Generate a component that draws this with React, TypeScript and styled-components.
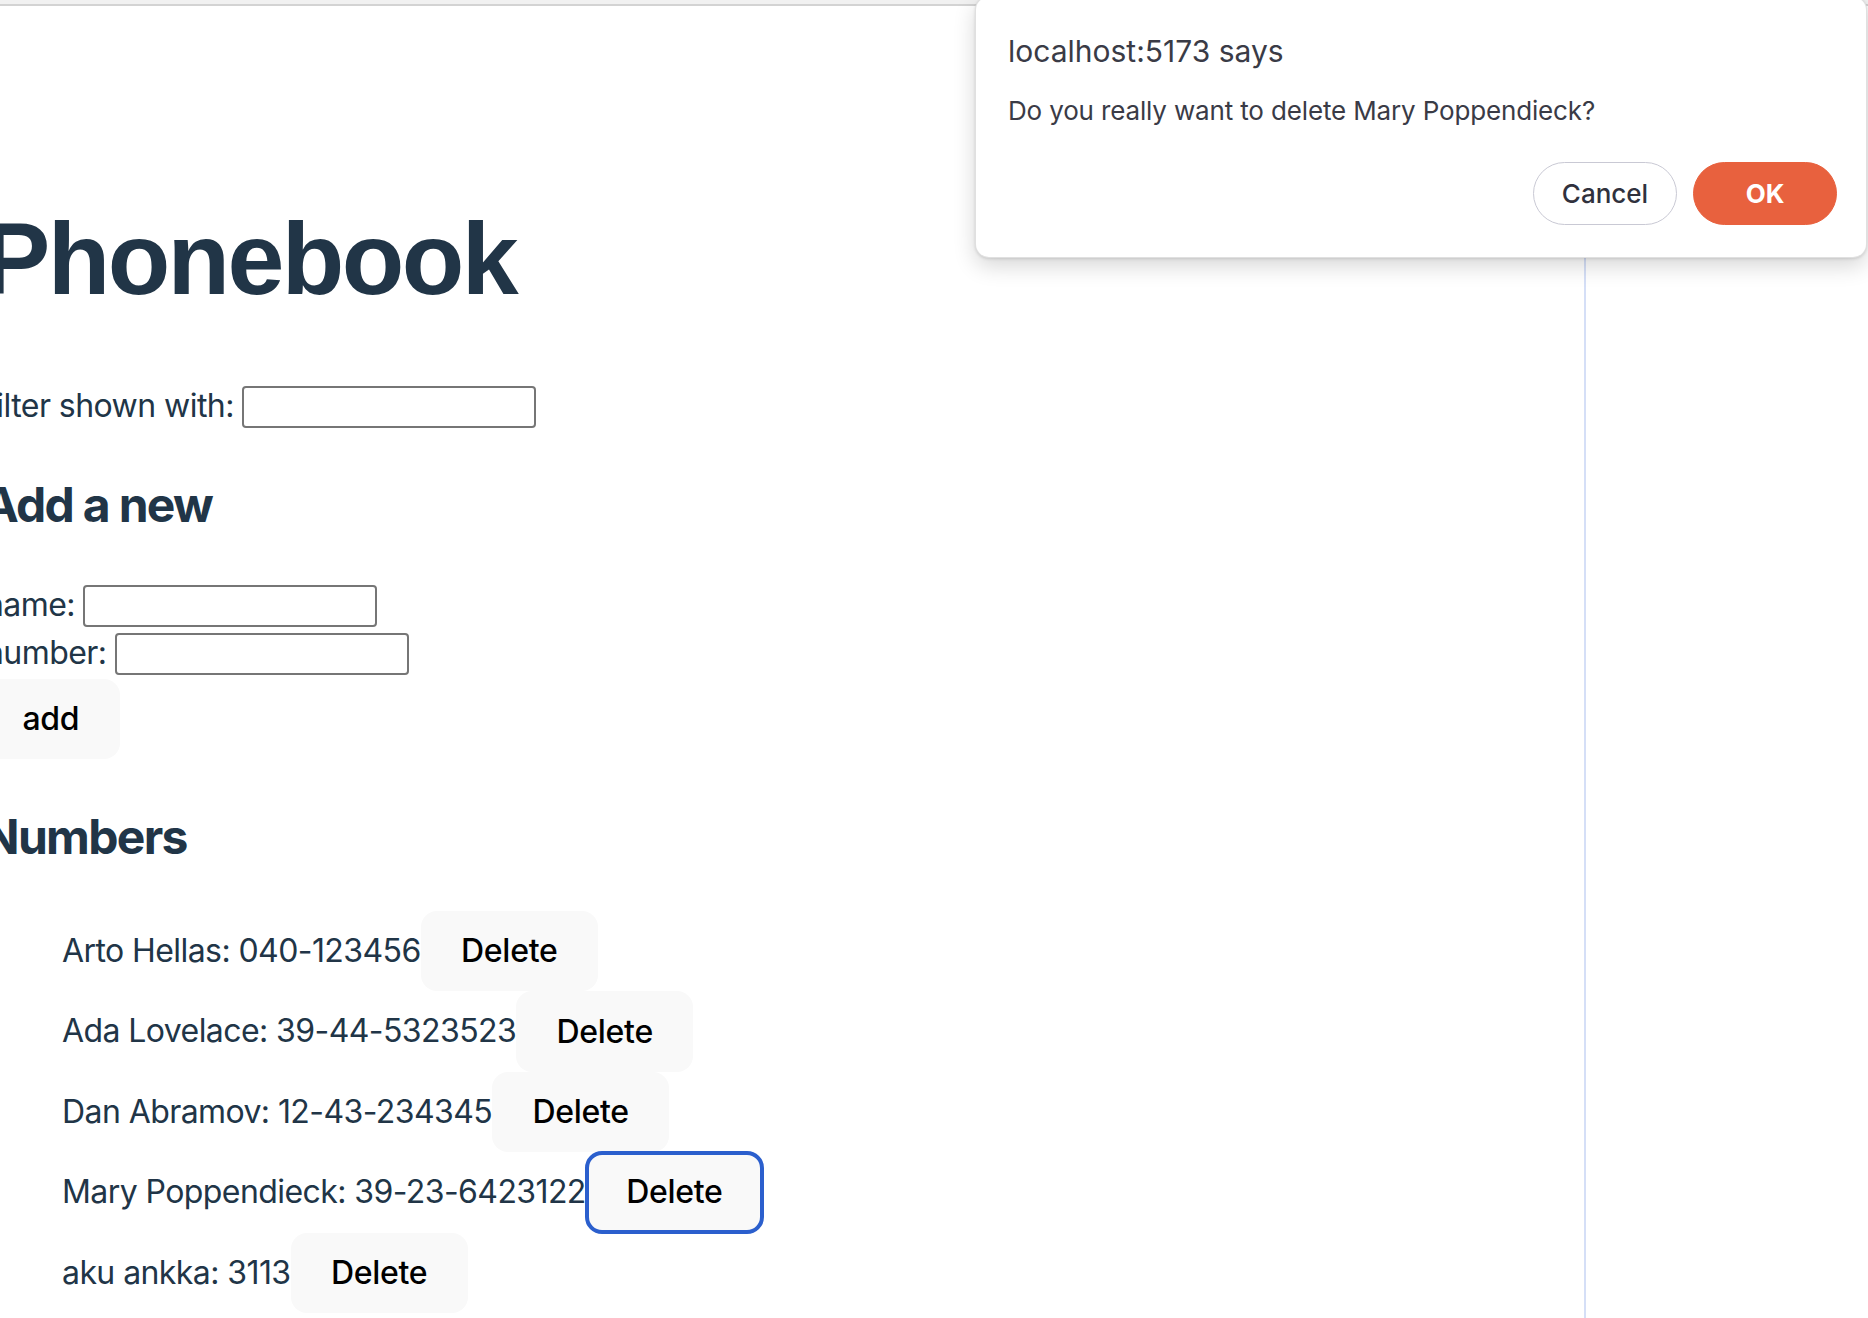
import React from "react";
import styled, { createGlobalStyle } from "styled-components";

const GlobalStyle = createGlobalStyle`
  html, body {
    margin: 0;
    padding: 0;
    height: 100%;
    overflow: hidden;
    background: #ffffff;
  }
  body {
    font-family: Inter, "Noto Sans", sans-serif;
    color: #213547;
  }
  * { box-sizing: border-box; }
`;

const Page = styled.div`
  position: relative;
  height: 1318px;
  overflow: hidden;
`;

const BrowserEdge = styled.div`
  height: 6px;
  background: #f1f1f1;
  border-bottom: 2px solid #d3d3d3;
`;

const Main = styled.div`
  display: flex;
  margin-top: -6px;
`;

const Content = styled.main`
  flex: 0 0 auto;
  width: 1601px;
  margin-left: -15px;
  min-height: 1318px;
  border-right: 2px solid #d5dff7;
  padding-top: 203px;
  font-size: 32px;
  line-height: 48px;
  letter-spacing: -0.55px;
`;

const Title = styled.h1`
  margin: 0 0 66px -3px;
  font-family: "Liberation Sans", Arial, sans-serif;
  font-weight: 700;
  font-size: 102.4px;
  line-height: 1.1;
  letter-spacing: -2.6px;
  color: #213547;
`;

const SubTitle = styled.h2<{ $top: number; $bottom: number }>`
  margin: ${(p) => p.$top}px 0 ${(p) => p.$bottom}px -2px;
  font-size: 48px;
  line-height: 72px;
  font-weight: 700;
  letter-spacing: -1.7px;
  color: #213547;
`;

const Line = styled.div`
  line-height: 48px;
  white-space: nowrap;
`;

const TextInput = styled.input`
  width: 294px;
  height: 42px;
  margin: 0;
  padding: 2px 4px;
  border: 2px solid #767676;
  border-radius: 4px;
  font-family: Inter, sans-serif;
  font-size: 26.67px;
  vertical-align: baseline;
  background: #ffffff;
`;

const Form = styled.form`
  margin: 40px 0 0 0;
`;

const ButtonRow = styled.div`
  margin-top: 2px;
  margin-left: -3px;
`;

const Button = styled.button<{ $focused?: boolean }>`
  display: inline-block;
  margin: 0;
  padding: 19.2px 38.4px;
  border: 2px solid transparent;
  border-radius: 16px;
  background: #f9f9f9;
  color: #000000;
  font-family: Inter, sans-serif;
  font-size: 32px;
  font-weight: 500;
  line-height: 38px;
  letter-spacing: -0.3px;
  cursor: pointer;
  vertical-align: baseline;
  outline: ${(p) => (p.$focused ? "4px solid #2b5fcd" : "none")};
  outline-offset: -3px;
`;

const List = styled.ul`
  margin: 0;
  padding: 0 0 0 77px;
  list-style: none;
`;

const Item = styled.li`
  white-space: nowrap;
`;

const Entry = styled.span`
  letter-spacing: -0.58px;
`;

const Dialog = styled.div`
  position: absolute;
  top: -4px;
  left: 975px;
  width: 892px;
  padding: 36px 29px 32px 32px;
  background: #ffffff;
  border: 1px solid rgba(0, 0, 0, 0.12);
  border-radius: 14px;
  box-shadow: 0 8px 22px rgba(0, 0, 0, 0.16), 0 1px 3px rgba(0, 0, 0, 0.12);
  color: #3a3b46;
`;

const DialogTitle = styled.div`
  font-size: 30px;
  line-height: 36px;
  font-weight: 400;
`;

const DialogMessage = styled.div`
  margin-top: 26px;
  font-size: 26px;
  line-height: 32px;
  letter-spacing: -0.15px;
`;

const DialogActions = styled.div`
  display: flex;
  justify-content: flex-end;
  gap: 16px;
  margin-top: 35px;
`;

const PillButton = styled.button<{ $primary?: boolean }>`
  width: 144px;
  height: 63px;
  border-radius: 32px;
  border: 1.5px solid ${(p) => (p.$primary ? "#e8613e" : "#c9c9d4")};
  background: ${(p) => (p.$primary ? "#e8613e" : "#ffffff")};
  color: ${(p) => (p.$primary ? "#ffffff" : "#30313d")};
  font-family: Inter, sans-serif;
  font-size: 26px;
  font-weight: ${(p) => (p.$primary ? 700 : 500)};
  cursor: pointer;
`;

const persons = [
  { name: "Arto Hellas", number: "040-123456" },
  { name: "Ada Lovelace", number: "39-44-5323523" },
  { name: "Dan Abramov", number: "12-43-234345" },
  { name: "Mary Poppendieck", number: "39-23-6423122" },
  { name: "aku ankka", number: "3113" },
];

export default function App() {
  return (
    <Page>
      <GlobalStyle />
      <BrowserEdge />
      <Main>
        <Content>
          <Title>Phonebook</Title>
          <Line>
            filter shown with: <TextInput />
          </Line>
          <SubTitle $top={39} $bottom={0}>Add a new</SubTitle>
          <Form onSubmit={(e) => e.preventDefault()}>
            <Line>
              name: <TextInput />
            </Line>
            <Line>
              number: <TextInput />
            </Line>
            <ButtonRow>
              <Button type="submit">add</Button>
            </ButtonRow>
          </Form>
          <SubTitle $top={42} $bottom={38}>Numbers</SubTitle>
          <List>
            {persons.map((p) => (
              <Item key={p.name}>
                <Entry>
                  {p.name}: {p.number}
                </Entry>
                <Button $focused={p.name === "Mary Poppendieck"}>Delete</Button>
              </Item>
            ))}
          </List>
        </Content>
      </Main>
      <Dialog role="alertdialog">
        <DialogTitle>localhost:5173 says</DialogTitle>
        <DialogMessage>Do you really want to delete Mary Poppendieck?</DialogMessage>
        <DialogActions>
          <PillButton>Cancel</PillButton>
          <PillButton $primary>OK</PillButton>
        </DialogActions>
      </Dialog>
    </Page>
  );
}
